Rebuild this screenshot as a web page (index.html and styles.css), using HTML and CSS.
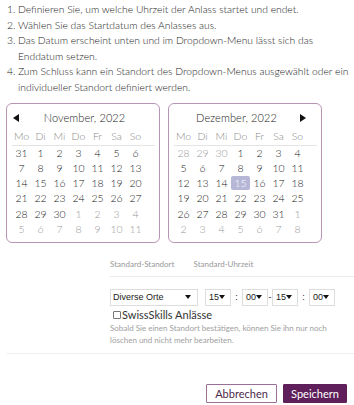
FILE: index.html
```html
<!DOCTYPE html>
<html lang="de">
<head>
    <meta charset="utf-8">
    <title>Anlass Datum</title>
    <link rel="stylesheet" href="styles.css">
</head>
<body>
<ol class="steps">
    <li>Definieren Sie, um welche Uhrzeit der Anlass startet und endet.</li>
    <li>Wählen Sie das Startdatum des Anlasses aus.</li>
    <li class="narrow">Das Datum erscheint unten und im Dropdown-Menu lässt sich das Enddatum setzen.</li>
    <li>Zum Schluss kann ein Standort des Dropdown-Menus ausgewählt oder ein individueller Standort definiert werden.</li>
</ol>

<div class="calendars">
    <div class="cal">
        <div class="cal-head">
            <span class="nav"><svg width="6" height="8" viewBox="0 0 6 8"><polygon points="6,0 6,8 0,4" fill="#111"/></svg></span>
            <span class="title">November, 2022</span>
        </div>
        <div class="weekdays"><span>Mo</span><span>Di</span><span>Mi</span><span>Do</span><span>Fr</span><span>Sa</span><span>So</span></div>
        <div class="days">
            <span>31</span><span>1</span><span>2</span><span>3</span><span>4</span><span>5</span><span>6</span>
            <span>7</span><span>8</span><span>9</span><span>10</span><span>11</span><span>12</span><span>13</span>
            <span>14</span><span>15</span><span>16</span><span>17</span><span>18</span><span>19</span><span>20</span>
            <span>21</span><span>22</span><span>23</span><span>24</span><span>25</span><span>26</span><span>27</span>
            <span>28</span><span>29</span><span>30</span><span class="other">1</span><span class="other">2</span><span class="other">3</span><span class="other">4</span>
            <span class="other">5</span><span class="other">6</span><span class="other">7</span><span class="other">8</span><span class="other">9</span><span class="other">10</span><span class="other">11</span>
        </div>
    </div>
    <div class="cal">
        <div class="cal-head">
            <span class="title">Dezember, 2022</span>
            <span class="nav"><svg width="6" height="8" viewBox="0 0 6 8"><polygon points="0,0 0,8 6,4" fill="#111"/></svg></span>
        </div>
        <div class="weekdays"><span>Mo</span><span>Di</span><span>Mi</span><span>Do</span><span>Fr</span><span>Sa</span><span>So</span></div>
        <div class="days">
            <span class="other">28</span><span class="other">29</span><span class="other">30</span><span>1</span><span>2</span><span>3</span><span>4</span>
            <span>5</span><span>6</span><span>7</span><span>8</span><span>9</span><span>10</span><span>11</span>
            <span>12</span><span>13</span><span>14</span><span class="selected">15</span><span>16</span><span>17</span><span>18</span>
            <span>19</span><span>20</span><span>21</span><span>22</span><span>23</span><span>24</span><span>25</span>
            <span>26</span><span>27</span><span>28</span><span>29</span><span>30</span><span>31</span><span class="other">1</span>
            <span class="other">2</span><span class="other">3</span><span class="other">4</span><span class="other">5</span><span class="other">6</span><span class="other">7</span><span class="other">8</span>
        </div>
    </div>
</div>

<div class="location">
    <div class="tabs">
        <span>Standard-Standort</span>
        <span>Standard-Uhrzeit</span>
    </div>
    <div class="pickers">
        <div class="select place">Diverse Orte<i class="caret"></i></div>
        <div class="select">15<i class="caret"></i></div>
        <span class="sep">:</span>
        <div class="select">00<i class="caret"></i></div>
        <span class="sep dash">-</span>
        <div class="select">15<i class="caret"></i></div>
        <span class="sep">:</span>
        <div class="select">00<i class="caret"></i></div>
    </div>
    <label class="check"><span class="box"></span>SwissSkills Anlässe</label>
    <p class="hint">Sobald Sie einen Standort bestätigen, können Sie ihn nur noch löschen und nicht mehr bearbeiten.</p>
</div>

<div class="actions">
    <button class="btn cancel">Abbrechen</button>
    <button class="btn save">Speichern</button>
</div>
</body>
</html>
```

FILE: styles.css
```css
body{
    margin: 0;
    font-family: Lato, "Noto Sans", sans-serif;
    font-weight: 300;
    color: #222;
    background: #fff;
}

/* Anleitung */
.steps{
    margin: 0;
    padding: 2px 0 0 7px;
    list-style: none;
    counter-reset: step;
    font-size: 10.3px;
    line-height: 15.6px;
}
.steps li{
    counter-increment: step;
    padding-left: 11px;
}
.steps li.narrow{
    padding-right: 20px;
}
.steps li::before{
    content: counter(step) ".";
    display: inline-block;
    width: 11px;
    margin-left: -11px;
}

/* Kalender */
.calendars{
    display: flex;
    gap: 8px;
    margin: 7px 0 0 6px;
}
.cal{
    width: 147px;
    height: 132px;
    border: 1px solid #b894b5;
    border-radius: 6px;
    padding: 6px 0 0 5px;
    font-size: 10.5px;
}
.cal-head{
    display: flex;
    align-items: center;
    width: 133px;
    height: 16px;
    padding-left: 1px;
}
.cal-head .title{
    flex: 1;
    text-align: center;
    font-size: 11px;
    letter-spacing: 0.1px;
}
.nav{
    width: 10px;
    display: flex;
    align-items: center;
}
.cal-head .nav:last-child{
    justify-content: center;
}
.weekdays, .days{
    display: grid;
    grid-template-columns: repeat(7, 19px);
    text-align: center;
}
.weekdays{
    width: 143px;
    margin-top: 2px;
    height: 17px;
    line-height: 16px;
    border-bottom: 1px solid #e4e4e4;
    color: #8a8a8a;
}
.days{
    grid-auto-rows: 15.3px;
    line-height: 15.3px;
}
.days .other{
    color: #999;
}
.days .selected{
    background: #b6b6d6;
    color: #fff;
    border-radius: 2px;
    margin: 0 0 1px;
    line-height: 14px;
}

/* Standort */
.location{
    margin-left: 110px;
}
.tabs{
    margin-top: 14px;
    padding-bottom: 5px;
    border-bottom: 1px solid #ececec;
    font-size: 8px;
    font-weight: 400;
    line-height: 14px;
    color: #999;
}
.tabs span{
    margin-right: 17px;
}
.pickers{
    display: flex;
    align-items: center;
    margin-top: 12px;
    font-family: "Liberation Sans", Arial, sans-serif;
    font-weight: 400;
    font-size: 9px;
    color: #222;
}
.select{
    display: flex;
    align-items: center;
    justify-content: space-between;
    width: 26px;
    height: 17px;
    box-sizing: border-box;
    border: 1px solid #ddd;
    padding: 0 6px 0 3px;
}
.select.place{
    width: 88px;
    margin-right: 7px;
    padding: 0 6px 0 2px;
}
.caret{
    width: 0;
    height: 0;
    border-left: 3px solid transparent;
    border-right: 3px solid transparent;
    border-top: 4px solid #111;
}
.sep{
    width: 11px;
    text-align: center;
}
.sep.dash{
    width: 4px;
}
.check{
    display: flex;
    align-items: center;
    margin-top: 2px;
    font-size: 11px;
    font-weight: 400;
    line-height: 14px;
    color: #333;
}
.check .box{
    width: 6px;
    height: 6px;
    border: 1px solid #777;
    border-radius: 1px;
    margin: 0 1px 0 3px;
}
.hint{
    margin: 0;
    width: 220px;
    font-size: 8px;
    font-weight: 400;
    line-height: 12px;
    color: #a0a0a0;
}

/* Buttons */
.actions{
    display: flex;
    justify-content: flex-end;
    gap: 6px;
    margin: 7px 0 0 7px;
    padding: 30px 7px 0 0;
    border-top: 1px solid #eee;
}
.btn{
    height: 19px;
    padding: 0;
    font-family: Lato, "Noto Sans", sans-serif;
    font-weight: 400;
    font-size: 11px;
    border-radius: 1px;
    cursor: pointer;
}
.cancel{
    width: 71px;
    background: #fff;
    border: 1px solid #9a6f97;
    color: #4d2a4a;
}
.save{
    width: 64px;
    background: #5e1f5a;
    border: 1px solid #5e1f5a;
    color: #fff;
}
```
